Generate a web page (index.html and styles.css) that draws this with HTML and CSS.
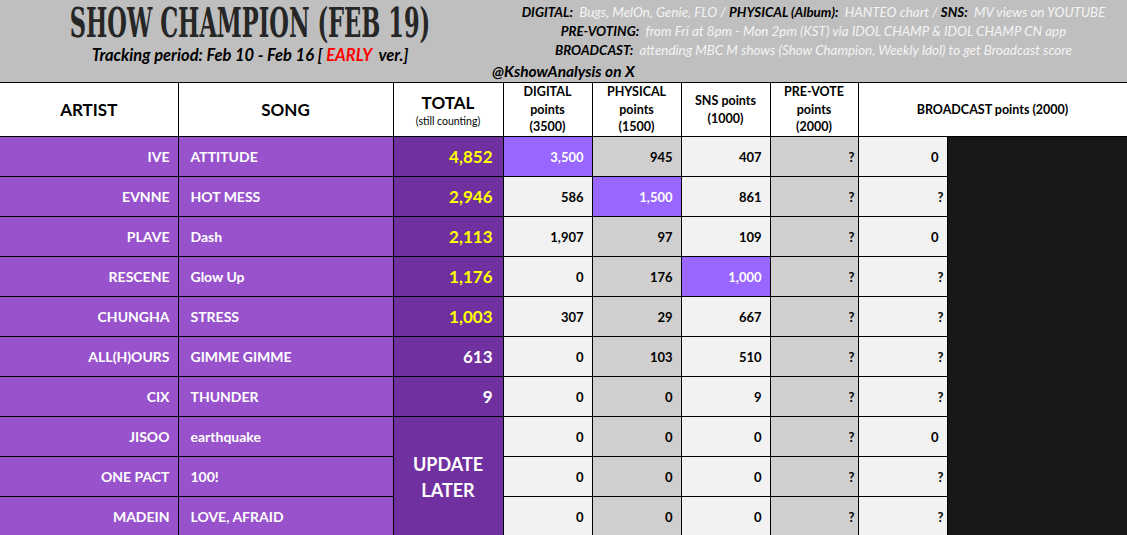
FILE: index.html
```html
<!DOCTYPE html>
<html lang="en">
<head>
<meta charset="utf-8">
<title>Show Champion (Feb 19)</title>
<link rel="stylesheet" href="styles.css">
</head>
<body>
<div class="page">
  <header class="top">
    <div class="titles">
      <h1 class="title">SHOW CHAMPION (FEB 19)</h1>
      <p class="period">Tracking period: Feb 10 - Feb 16 [ <span class="early">EARLY</span>&nbsp; ver.]</p>
    </div>
    <div class="notes">
      <p class="note"><b>DIGITAL:</b>&nbsp; Bugs, MelOn, Genie, FLO / <b>PHYSICAL (Album):</b>&nbsp; HANTEO chart / <b>SNS:</b>&nbsp; MV views on YOUTUBE</p>
      <p class="note"><b>PRE-VOTING:</b>&nbsp; from Fri at 8pm - Mon 2pm (KST) via IDOL CHAMP &amp; IDOL CHAMP CN app</p>
      <p class="note"><b>BROADCAST:</b>&nbsp; attending MBC M shows (Show Champion, Weekly Idol) to get Broadcast score</p>
      <p class="handle">@KshowAnalysis on X</p>
    </div>
  </header>

  <table class="chart">
    <colgroup>
      <col class="c-artist"><col class="c-song"><col class="c-total">
      <col class="c-pts"><col class="c-pts"><col class="c-pts"><col class="c-pre"><col class="c-pts"><col class="c-void">
    </colgroup>
    <thead>
      <tr class="head">
        <th class="h-big first">ARTIST</th>
        <th class="h-big">SONG</th>
        <th class="h-total"><span class="h-total-main">TOTAL</span><span class="h-total-sub">(still counting)</span></th>
        <th class="h-small">DIGITAL<br>points<br>(3500)</th>
        <th class="h-small">PHYSICAL<br>points<br>(1500)</th>
        <th class="h-small">SNS points<br>(1000)</th>
        <th class="h-small">PRE-VOTE<br>points<br>(2000)</th>
        <th class="h-small h-wide" colspan="2">BROADCAST points (2000)</th>
      </tr>
    </thead>
    <tbody>
      <tr>
        <td class="artist first">IVE</td><td class="song">ATTITUDE</td><td class="total">4,852</td>
        <td class="num hl">3,500</td><td class="num gray">945</td><td class="num light">407</td><td class="num gray q">?</td><td class="num light">0</td>
        <td class="void" rowspan="10"></td>
      </tr>
      <tr>
        <td class="artist first">EVNNE</td><td class="song">HOT MESS</td><td class="total">2,946</td>
        <td class="num light">586</td><td class="num hl">1,500</td><td class="num light">861</td><td class="num gray q">?</td><td class="num light q">?</td>
      </tr>
      <tr>
        <td class="artist first">PLAVE</td><td class="song">Dash</td><td class="total">2,113</td>
        <td class="num light">1,907</td><td class="num gray">97</td><td class="num light">109</td><td class="num gray q">?</td><td class="num light">0</td>
      </tr>
      <tr>
        <td class="artist first">RESCENE</td><td class="song">Glow Up</td><td class="total">1,176</td>
        <td class="num light">0</td><td class="num gray">176</td><td class="num hl">1,000</td><td class="num gray q">?</td><td class="num light q">?</td>
      </tr>
      <tr>
        <td class="artist first">CHUNGHA</td><td class="song">STRESS</td><td class="total">1,003</td>
        <td class="num light">307</td><td class="num gray">29</td><td class="num light">667</td><td class="num gray q">?</td><td class="num light q">?</td>
      </tr>
      <tr>
        <td class="artist first">ALL(H)OURS</td><td class="song">GIMME GIMME</td><td class="total plain">613</td>
        <td class="num light">0</td><td class="num gray">103</td><td class="num light">510</td><td class="num gray q">?</td><td class="num light q">?</td>
      </tr>
      <tr>
        <td class="artist first">CIX</td><td class="song">THUNDER</td><td class="total plain">9</td>
        <td class="num light">0</td><td class="num gray">0</td><td class="num light">9</td><td class="num gray q">?</td><td class="num light q">?</td>
      </tr>
      <tr>
        <td class="artist first">JISOO</td><td class="song">earthquake</td><td class="total later" rowspan="3">UPDATE<br>LATER</td>
        <td class="num light">0</td><td class="num gray">0</td><td class="num light">0</td><td class="num gray q">?</td><td class="num light">0</td>
      </tr>
      <tr>
        <td class="artist first">ONE PACT</td><td class="song">100!</td>
        <td class="num light">0</td><td class="num gray">0</td><td class="num light">0</td><td class="num gray q">?</td><td class="num light q">?</td>
      </tr>
      <tr>
        <td class="artist first">MADEIN</td><td class="song">LOVE, AFRAID</td>
        <td class="num light">0</td><td class="num gray">0</td><td class="num light">0</td><td class="num gray q">?</td><td class="num light q">?</td>
      </tr>
    </tbody>
  </table>
</div>
</body>
</html>
```

FILE: styles.css
```css
html, body {
  margin: 0;
  padding: 0;
  overflow: hidden;
}

body {
  background: #bfbfbf;
  font-family: Lato, "Open Sans", sans-serif;
  color: #000;
}

.page {
  width: 1127px;
}

/* ---------- top band ---------- */
.top {
  display: flex;
  height: 82px;
  background: #bfbfbf;
}

.titles {
  width: 500px;
  display: flex;
  flex-direction: column;
  align-items: center;
}

/* tall condensed headline: natural width, stretched vertically */
.title {
  margin: 2px 0 0;
  height: 40px;
  font-family: "DejaVu Serif", "Liberation Serif", serif;
  font-weight: bold;
  font-size: 22.55px;
  line-height: 22px;
  color: #262626;
  white-space: nowrap;
  transform: scaleY(1.825);
  transform-origin: 50% 0;
}

.period {
  margin: 3px 0 0;
  font-weight: bold;
  font-style: italic;
  font-size: 16.5px;
  line-height: 20px;
  white-space: nowrap;
}

.early {
  color: #ff0000;
}

.notes {
  flex: 1;
  display: flex;
  flex-direction: column;
  align-items: center;
  padding-top: 3px;
}

.note {
  margin: 0;
  font-style: italic;
  font-size: 13.4px;
  line-height: 19px;
  color: #f4f4f4;
  white-space: nowrap;
}

.note b {
  color: #000;
  font-weight: bold;
}

.handle {
  align-self: flex-start;
  margin: 2px 0 0 -8px;
  font-weight: bold;
  font-style: italic;
  font-size: 15.5px;
  line-height: 19px;
}

/* ---------- table ---------- */
.chart {
  border-collapse: collapse;
  table-layout: fixed;
  width: 1127px;
  background: #fff;
}

.c-artist { width: 178px; }
.c-song { width: 215px; }
.c-total { width: 110px; }
.c-pts { width: 89px; }
.c-pre { width: 88px; }
.c-void { width: 180px; }

.chart th,
.chart td {
  border: 1px solid #000;
  padding: 0;
  white-space: nowrap;
  overflow: hidden;
}

.chart .first {
  border-left: none;
}

.head th {
  height: 53px;
  background: #fff;
  font-weight: bold;
  text-align: center;
  vertical-align: middle;
}

.h-big {
  font-size: 17px;
}

.h-total-main {
  display: block;
  font-size: 17px;
  line-height: 20px;
}

.h-total-sub {
  display: block;
  font-size: 10.5px;
  font-weight: normal;
  line-height: 12px;
  margin-top: 2px;
}

.h-small {
  font-size: 12.5px;
  line-height: 17.5px;
}

.chart tbody td {
  height: 39px;
  font-weight: bold;
}

.artist {
  background: #9853cc;
  color: #fff;
  text-align: right;
  padding-right: 8px !important;
  font-size: 14px;
}

.song {
  background: #9853cc;
  color: #fff;
  text-align: left;
  padding-left: 12px !important;
  font-size: 14px;
}

.total {
  background: #7030a0;
  color: #ffff00;
  text-align: right;
  padding-right: 10px !important;
  font-size: 17px;
}

.total.plain {
  color: #fff;
}

.total.later {
  color: #fff;
  text-align: center;
  padding-right: 0 !important;
  font-size: 18px;
  line-height: 26px;
}

.num {
  text-align: right;
  padding-right: 8px !important;
  font-size: 13px;
}

.num.q {
  padding-right: 3px !important;
}

.light { background: #f2f2f2; }
.gray { background: #d0cece; }
.hl { background: #9966ff; color: #fff; }

.chart .void {
  background: #181818;
  border: none;
}
```
